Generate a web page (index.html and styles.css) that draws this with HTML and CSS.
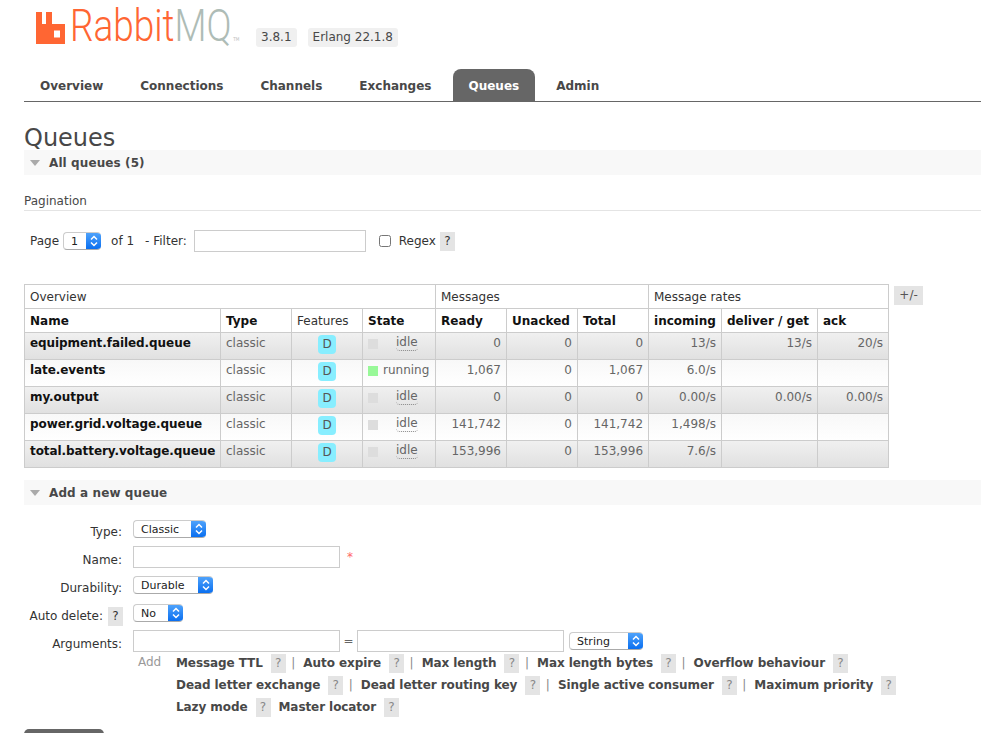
FILE: index.html
```html
<!DOCTYPE html>
<html lang="en">
<head>
    <meta charset="UTF-8">
    <title>RabbitMQ Management</title>
    <link rel="stylesheet" href="styles.css">
</head>
<body>
    <div class="header">
        <div class="logo">
            <svg class="logo-icon" width="29" height="32" viewBox="0 0 29 32">
                <path fill="#ff6633" fill-rule="evenodd" d="M0 0H6V12H10V0H16V12H29V32H0ZM18 18.500V25.500H24V18.500Z"/>
            </svg>
            <span class="logo-text"><span class="logo-rabbit">Rabbit</span><span class="logo-mq">MQ</span><span class="logo-tm">TM</span></span>
        </div>
        <span class="version">3.8.1</span>
        <span class="version">Erlang 22.1.8</span>
    </div>

    <ul class="tabs">
        <li>Overview</li>
        <li>Connections</li>
        <li>Channels</li>
        <li>Exchanges</li>
        <li class="selected">Queues</li>
        <li>Admin</li>
    </ul>

    <div class="main">
        <h1>Queues</h1>
        <div class="section-title"><span class="triangle"></span>All queues (5)</div>

        <h3>Pagination</h3>
        <div class="filter-row">
            <span>Page</span>
            <div class="select select-page"><span class="select-value">1</span><span class="select-arrow"><svg width="10" height="14" viewBox="0 0 10 14"><path d="M2 5.500L5 2.500L8 5.500M2 8.500L5 11.500L8 8.500" fill="none" stroke="#fff" stroke-width="1.500"/></svg></span></div>
            <span class="of-label">of 1</span>
            <span class="filter-label">- Filter:</span>
            <input type="text" class="filter-input">
            <input type="checkbox" class="regex-check">
            <span>Regex</span>
            <span class="help">?</span>
        </div>

        <div class="table-wrap">
            <table class="list">
                <colgroup>
                    <col class="c-name"><col class="c-type"><col class="c-features"><col class="c-state">
                    <col class="c-ready"><col class="c-unacked"><col class="c-total">
                    <col class="c-incoming"><col class="c-deliver"><col class="c-ack">
                </colgroup>
                <thead>
                    <tr>
                        <th colspan="4">Overview</th>
                        <th colspan="3">Messages</th>
                        <th colspan="3">Message rates</th>
                    </tr>
                    <tr>
                        <th class="bold">Name</th>
                        <th class="bold">Type</th>
                        <th>Features</th>
                        <th class="bold">State</th>
                        <th class="bold">Ready</th>
                        <th class="bold">Unacked</th>
                        <th class="bold">Total</th>
                        <th class="bold">incoming</th>
                        <th class="bold">deliver / get</th>
                        <th class="bold">ack</th>
                    </tr>
                </thead>
                <tbody>
                    <tr class="alt1">
                        <td class="name">equipment.failed.queue</td>
                        <td>classic</td>
                        <td class="center"><span class="badge">D</span></td>
                        <td><span class="state idle"><span class="dot"></span><abbr>idle</abbr></span></td>
                        <td class="num">0</td><td class="num">0</td><td class="num">0</td>
                        <td class="num">13/s</td><td class="num">13/s</td><td class="num">20/s</td>
                    </tr>
                    <tr class="alt2">
                        <td class="name">late.events</td>
                        <td>classic</td>
                        <td class="center"><span class="badge">D</span></td>
                        <td><span class="state"><span class="dot green"></span>running</span></td>
                        <td class="num">1,067</td><td class="num">0</td><td class="num">1,067</td>
                        <td class="num">6.0/s</td><td class="num"></td><td class="num"></td>
                    </tr>
                    <tr class="alt1">
                        <td class="name">my.output</td>
                        <td>classic</td>
                        <td class="center"><span class="badge">D</span></td>
                        <td><span class="state idle"><span class="dot"></span><abbr>idle</abbr></span></td>
                        <td class="num">0</td><td class="num">0</td><td class="num">0</td>
                        <td class="num">0.00/s</td><td class="num">0.00/s</td><td class="num">0.00/s</td>
                    </tr>
                    <tr class="alt2">
                        <td class="name">power.grid.voltage.queue</td>
                        <td>classic</td>
                        <td class="center"><span class="badge">D</span></td>
                        <td><span class="state idle"><span class="dot"></span><abbr>idle</abbr></span></td>
                        <td class="num">141,742</td><td class="num">0</td><td class="num">141,742</td>
                        <td class="num">1,498/s</td><td class="num"></td><td class="num"></td>
                    </tr>
                    <tr class="alt1">
                        <td class="name">total.battery.voltage.queue</td>
                        <td>classic</td>
                        <td class="center"><span class="badge">D</span></td>
                        <td><span class="state idle"><span class="dot"></span><abbr>idle</abbr></span></td>
                        <td class="num">153,996</td><td class="num">0</td><td class="num">153,996</td>
                        <td class="num">7.6/s</td><td class="num"></td><td class="num"></td>
                    </tr>
                </tbody>
            </table>
            <span class="help plus-minus">+/-</span>
        </div>

        <div class="section-title section-add"><span class="triangle"></span>Add a new queue</div>

        <form class="queue-form">
            <label>Type:</label>
            <div class="field"><div class="select select-type"><span class="select-value">Classic</span><span class="select-arrow"><svg width="10" height="14" viewBox="0 0 10 14"><path d="M2 5.500L5 2.500L8 5.500M2 8.500L5 11.500L8 8.500" fill="none" stroke="#fff" stroke-width="1.500"/></svg></span></div></div>

            <label>Name:</label>
            <div class="field"><input type="text" class="text-input"><span class="required">*</span></div>

            <label>Durability:</label>
            <div class="field"><div class="select select-durable"><span class="select-value">Durable</span><span class="select-arrow"><svg width="10" height="14" viewBox="0 0 10 14"><path d="M2 5.500L5 2.500L8 5.500M2 8.500L5 11.500L8 8.500" fill="none" stroke="#fff" stroke-width="1.500"/></svg></span></div></div>

            <label>Auto delete: <span class="help">?</span></label>
            <div class="field"><div class="select select-no"><span class="select-value">No</span><span class="select-arrow"><svg width="10" height="14" viewBox="0 0 10 14"><path d="M2 5.500L5 2.500L8 5.500M2 8.500L5 11.500L8 8.500" fill="none" stroke="#fff" stroke-width="1.500"/></svg></span></div></div>

            <label>Arguments:</label>
            <div class="field">
                <input type="text" class="text-input">
                <span class="equals">=</span>
                <input type="text" class="text-input">
                <div class="select select-string"><span class="select-value">String</span><span class="select-arrow"><svg width="10" height="14" viewBox="0 0 10 14"><path d="M2 5.500L5 2.500L8 5.500M2 8.500L5 11.500L8 8.500" fill="none" stroke="#fff" stroke-width="1.500"/></svg></span></div>
            </div>

            <div class="args-help">
                <span class="add-link">Add</span>
                <div class="arg-rows">
                    <div class="arg-row">
                        <b>Message TTL</b><span class="help">?</span><i>|</i>
                        <b>Auto expire</b><span class="help">?</span><i>|</i>
                        <b>Max length</b><span class="help">?</span><i>|</i>
                        <b>Max length bytes</b><span class="help">?</span><i>|</i>
                        <b>Overflow behaviour</b><span class="help">?</span>
                    </div>
                    <div class="arg-row">
                        <b>Dead letter exchange</b><span class="help">?</span><i>|</i>
                        <b>Dead letter routing key</b><span class="help">?</span><i>|</i>
                        <b>Single active consumer</b><span class="help">?</span><i>|</i>
                        <b>Maximum priority</b><span class="help">?</span>
                    </div>
                    <div class="arg-row">
                        <b>Lazy mode</b><span class="help">?</span>
                        <b>Master locator</b><span class="help">?</span>
                    </div>
                </div>
            </div>
        </form>

        <button type="button" class="add-button" aria-label="Add queue"></button>
    </div>
</body>
</html>
```

FILE: styles.css
```css
html, body {
    height: 100%;
    overflow: hidden;
}
body {
    margin: 0;
    font-family: "DejaVu Sans", Verdana, sans-serif;
    font-size: 12px;
    color: #484848;
    background: #fff;
}

/* header */
.header {
    display: flex;
    align-items: flex-start;
    height: 69px;
    padding-left: 36px;
}
.logo {
    display: flex;
    align-items: flex-start;
    flex-shrink: 0;
    width: 220px;
    padding-top: 12px;
    height: 40px;
}
.logo-icon {
    flex-shrink: 0;
}
.logo-text {
    flex-shrink: 0;
    margin-left: 5px;
    margin-top: -2px;
    white-space: nowrap;
    transform: scaleX(0.84);
    transform-origin: left top;
}
.logo-rabbit, .logo-mq {
    font-family: Roboto, sans-serif;
    font-weight: 300;
    font-size: 44px;
    line-height: 32px;
    color: #ff6633;
}
.logo-mq {
    color: #aebcb6;
}
.logo-tm {
    margin-left: 2px;
    font-size: 5px;
    color: #bbb;
}
.version {
    margin-top: 28px;
    margin-right: 11px;
    padding: 0 5px;
    height: 19px;
    line-height: 19px;
    font-size: 12px;
    background: #f0f0f0;
    border-radius: 3px;
}

/* tabs */
.tabs {
    display: flex;
    gap: 5px;
    list-style: none;
    margin: 0 0 0 24px;
    padding: 0;
    height: 32px;
    border-bottom: 1px solid #666;
}
.tabs li {
    padding: 0 16px;
    line-height: 34px;
    font-size: 12px;
    font-weight: bold;
}
.tabs .selected {
    margin-left: 1px;
    padding-left: 15px;
    background: #666;
    color: #fff;
    border-radius: 8px 8px 0 0;
}

.main {
    padding: 0 0 0 24px;
}
h1 {
    margin: 24px 0 0;
    font-size: 24px;
    font-weight: normal;
    line-height: 24px;
}

.section-title {
    display: flex;
    align-items: center;
    height: 25px;
    background: #f8f8f8;
    font-size: 12px;
    font-weight: bold;
    letter-spacing: 0.1px;
}
.triangle {
    width: 0;
    height: 0;
    margin: 1px 9px 0 6px;
    border-left: 5.500px solid transparent;
    border-right: 5.500px solid transparent;
    border-top: 6px solid #aaa;
}

h3 {
    margin: 19px 0 0;
    height: 16px;
    line-height: 15px;
    font-size: 12px;
    font-weight: normal;
    border-bottom: 1px solid #e4e4e4;
}

/* filter */
.filter-row {
    display: flex;
    align-items: center;
    height: 22px;
    margin-top: 19px;
    padding-left: 6px;
    color: #333;
}
.of-label {
    margin-left: 10px;
}
.filter-label {
    margin-left: 11px;
    margin-right: 7px;
}
.filter-input {
    width: 172px;
    height: 22px;
    box-sizing: border-box;
    border: 1px solid #ccc;
    padding: 0;
    margin: 0;
}
.regex-check {
    width: 12px;
    height: 12px;
    margin: 0 8px 0 13px;
}
.help {
    display: inline-block;
    width: 15px;
    height: 19px;
    margin-left: 4px;
    line-height: 19px;
    text-align: center;
    font-size: 12px;
    font-weight: normal;
    color: #888;
    background: #e4e4e4;
}
.filter-row .help, .queue-form label .help {
    color: #333;
}

/* fake mac select */
.select {
    display: flex;
    box-sizing: border-box;
    height: 18px;
    margin-left: 4px;
    background: #fff;
    border: 1px solid #ccc;
    border-bottom-color: #aaa;
    border-right: 0;
    border-radius: 4px;
    overflow: hidden;
    font-size: 11px;
    color: #222;
    line-height: 17px;
    flex-shrink: 0;
}
.select-value {
    flex: 1;
    padding-left: 7px;
}
.select-arrow {
    display: flex;
    align-items: center;
    justify-content: center;
    width: 15px;
    background: linear-gradient(#4ea2fb, #0a6ff0);
}
.select-page { width: 38px; }
.select-type { width: 73px; margin-left: 0; }
.select-durable { width: 80px; margin-left: 0; }
.select-no { width: 50px; margin-left: 0; }
.select-string { width: 74px; margin-left: 5px; }

/* table */
.table-wrap {
    display: flex;
    align-items: flex-start;
    margin-top: 32px;
}
.list {
    table-layout: fixed;
    width: 864px;
    border-collapse: collapse;
    font-size: 12px;
    flex-shrink: 0;
}
.c-name { width: 196px; }
.c-type { width: 71px; }
.c-features { width: 71px; }
.c-state { width: 73px; }
.c-ready { width: 71px; }
.c-unacked { width: 71px; }
.c-total { width: 71px; }
.c-incoming { width: 73px; }
.c-deliver { width: 96px; }
.c-ack { width: 71px; }
.list th, .list td {
    border: 1px solid #ccc;
    padding: 0 5px;
    white-space: nowrap;
    overflow: hidden;
}
.list th {
    height: 23px;
    text-align: left;
    font-weight: normal;
    color: #333;
    line-height: 22px;
}
.list th.bold {
    font-weight: bold;
    color: #111;
}
.list td {
    height: 26px;
    vertical-align: top;
    line-height: 20px;
    color: #666;
}
.list td.name {
    font-weight: bold;
    color: #111;
    letter-spacing: -0.07px;
}
.list td.num {
    text-align: right;
}
.list td.center {
    text-align: center;
}
.alt1 {
    background: linear-gradient(#f0f0f0, #e0e0e0);
}
.alt2 {
    background: linear-gradient(#f8f8f8, #fff);
}
.badge {
    display: inline-block;
    width: 18px;
    height: 19px;
    margin-top: 2px;
    line-height: 19px;
    border-radius: 4px;
    background: #88eeff;
    color: #555;
    text-align: center;
}
.state {
    display: flex;
    align-items: center;
    height: 20px;
}
.state.idle abbr {
    margin-left: 13px;
    border-bottom: 1px dotted #888;
    border-radius: 0 0 4px 4px;
    line-height: 15px;
    text-decoration: none;
}
.dot {
    width: 10px;
    height: 10px;
    margin-top: 2px;
    margin-right: 5px;
    background: #ddd;
}
.dot.green {
    background: #98f898;
}
.plus-minus {
    width: 29px;
    margin-top: 2px;
    margin-left: 5px;
    color: #555;
}

/* add queue */
.section-add {
    margin-top: 12px;
}
.queue-form {
    display: grid;
    grid-template-columns: 98px 1fr;
    grid-template-rows: repeat(5, 28px) auto;
    column-gap: 11px;
    margin-top: 12px;
}
.queue-form label {
    display: flex;
    align-items: center;
    justify-content: flex-end;
    margin-top: 2px;
    color: #333;
    white-space: nowrap;
}
.queue-form label .help {
    margin-left: 5px;
    margin-right: -1px;
}
.field {
    display: flex;
    align-items: center;
    height: 24px;
}
.text-input {
    box-sizing: border-box;
    width: 207px;
    height: 22px;
    margin: 0;
    padding: 0;
    border: 1px solid #ccc;
}
.required {
    margin-left: 7px;
    color: #f66;
}
.equals {
    margin: 0 3.500px;
    color: #666;
}
.args-help {
    grid-column: 2;
    display: flex;
    margin-top: -5px;
}
.add-link {
    width: 43px;
    padding-left: 5px;
    box-sizing: border-box;
    color: #999;
    line-height: 20px;
}
.arg-row {
    display: flex;
    align-items: center;
    height: 22px;
    white-space: nowrap;
}
.arg-row b {
    margin-right: 4px;
    letter-spacing: -0.08px;
}
.arg-row .help {
    margin-left: 4px;
    margin-right: 0;
}
.arg-row i {
    font-style: normal;
    margin: 0 8px 0 5.500px;
    color: #888;
}
.arg-row .help + b {
    margin-left: 8px;
}
.add-button {
    display: block;
    width: 80px;
    height: 28px;
    margin-top: 11px;
    padding: 0;
    border: 0;
    border-radius: 5px;
    background: #666;
}
```
